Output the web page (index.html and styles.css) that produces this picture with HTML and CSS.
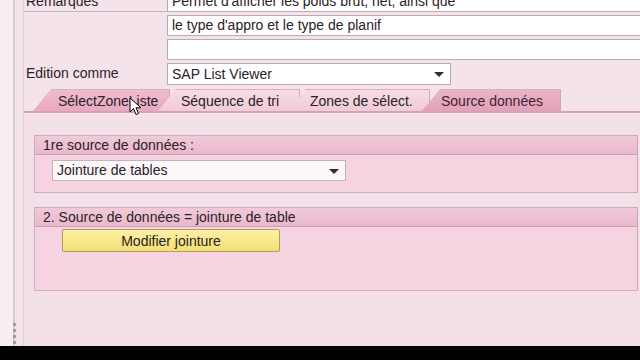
FILE: index.html
```html
<!DOCTYPE html>
<html lang="fr">
<head>
<meta charset="utf-8">
<title>SAP Query</title>
<link rel="stylesheet" href="styles.css">
</head>
<body>
<div class="screen">
  <aside class="side">
    <div class="grip"><span></span><span></span><span></span><span></span></div>
  </aside>
  <main class="main">
    <div class="form">
      <div class="label underline">Remarques</div>
      <div class="field">Permet d'afficher les poids brut, net, ainsi que</div>
      <div class="label"></div>
      <div class="field">le type d'appro et le type de planif</div>
      <div class="label"></div>
      <div class="field"></div>
      <div class="label">Edition comme</div>
      <div class="select wide">SAP List Viewer<span class="arrow"></span></div>
    </div>
    <nav class="tabs">
      <div class="tab t1 hot">SélectZoneListe</div>
      <div class="tab t2">Séquence de tri</div>
      <div class="tab t3">Zones de sélect.</div>
      <div class="tab t4 active">Source données</div>
    </nav>
    <section class="panel">
      <div class="group g1">
        <div class="ghead">1re source de données :</div>
        <div class="gbody">
          <div class="select narrow">Jointure de tables<span class="arrow"></span></div>
        </div>
      </div>
      <div class="group g2">
        <div class="ghead">2. Source de données = jointure de table</div>
        <div class="gbody">
          <button class="btn">Modifier jointure</button>
        </div>
      </div>
    </section>
  </main>
  <svg class="cursor" width="14" height="20" viewBox="0 0 14 20"><path d="M1 1 L1 15 L4.5 11.5 L7 17.5 L9.5 16.5 L7 10.8 L12 10.8 Z" fill="#fff" stroke="#000" stroke-width="1"/></svg>
</div>
<div class="bottom"></div>
</body>
</html>
```
FILE: styles.css
```css
* { box-sizing: border-box; margin: 0; padding: 0; }
html, body { width: 640px; height: 360px; overflow: hidden; background: #000; }
body { font-family: "Liberation Sans", Arial, sans-serif; font-size: 14px; color: #2b2226; }
.screen { position: relative; height: 346px; display: flex; background: #f4e3ea; overflow: hidden; }
.side { width: 24px; flex: none; display: flex; align-items: flex-end; background: linear-gradient(to right, #f8eef2 0 13px, #d9c9d0 13px 15px, #f3e3ea 15px 23px, #e3ccd6 23px 24px); }
.grip { display: flex; flex-direction: column; gap: 3px; margin: 0 0 2px 13px; }
.grip span { width: 3px; height: 3px; background: #a79aa0; }
.main { flex: 1; display: flex; flex-direction: column; min-width: 0; }
.form { display: grid; grid-template-columns: 143px 1fr; row-gap: 3px; margin-top: -9px; }
.label { height: 21px; padding-left: 2px; line-height: 21px; }
.label.underline { border-bottom: 1px solid #c5b3bb; }
.field { height: 21px; background: #fff; border: 1px solid #bcaab2; border-right: none; padding-left: 4px; line-height: 19px; }
.select { position: relative; height: 22px; background: #fff; border: 1px solid #bcaab2; padding-left: 4px; line-height: 20px; }
.select.wide { width: 284px; }
.select.narrow { width: 294px; height: 21px; line-height: 19px; border-color: #c8b0bb; background: #fcf7f9; }
.arrow { position: absolute; right: 6px; top: 8px; width: 0; height: 0; border-left: 5px solid transparent; border-right: 5px solid transparent; border-top: 5px solid #3a2a30; }
.tabs { display: flex; height: 25px; margin-top: 3px; padding-left: 9px; border-bottom: 2px solid #d7a0b5; }
.tab { flex: none; height: 22px; line-height: 22px; margin-top: 1px; background: linear-gradient(#f6dce6, #f0cbd8); border-top: 1px solid #d6b0bf; border-right: 1px solid #d0a6b7; clip-path: polygon(18px 0, 100% 0, 100% 100%, 0 100%); color: #2b2226; white-space: nowrap; }
.t1 { width: 137px; padding-left: 25px; }
.t2 { width: 142px; padding-left: 23px; margin-left: -12px; }
.t3 { width: 142px; padding-left: 22px; margin-left: -12px; }
.t4 { width: 139px; padding-left: 19px; margin-left: -8px; }
.tab.hot { background: linear-gradient(#f0bccf, #e7a9c0); }
.tab.active { background: linear-gradient(#eab4c8, #e2a0b9); color: #40232f; }
.panel { flex: 1; background: #f3e0e8; padding: 21px 2px 0 10px; display: flex; flex-direction: column; gap: 14px; border-top: 1px solid #f8e8ee; }
.group { border: 1px solid #cfaebd; border-right: 1px solid #cfa3b4; background: #f5d3e0; }
.ghead { height: 19px; line-height: 18px; padding-left: 8px; background: linear-gradient(#f0cad9, #e9b8cc); border-bottom: 1px solid #cfa0b3; }
.g1 .gbody { height: 37px; padding: 5px 0 0 17px; }
.g2 .gbody { height: 63px; padding: 2px 0 0 27px; }
.btn { display: block; width: 218px; height: 23px; font: inherit; color: #2b2226; background: linear-gradient(#fbf0a6, #f3df74); border: 1px solid #b59a62; border-radius: 2px; text-align: center; }
.cursor { position: absolute; left: 129px; top: 97px; }
.bottom { height: 14px; background: #000; }
```
